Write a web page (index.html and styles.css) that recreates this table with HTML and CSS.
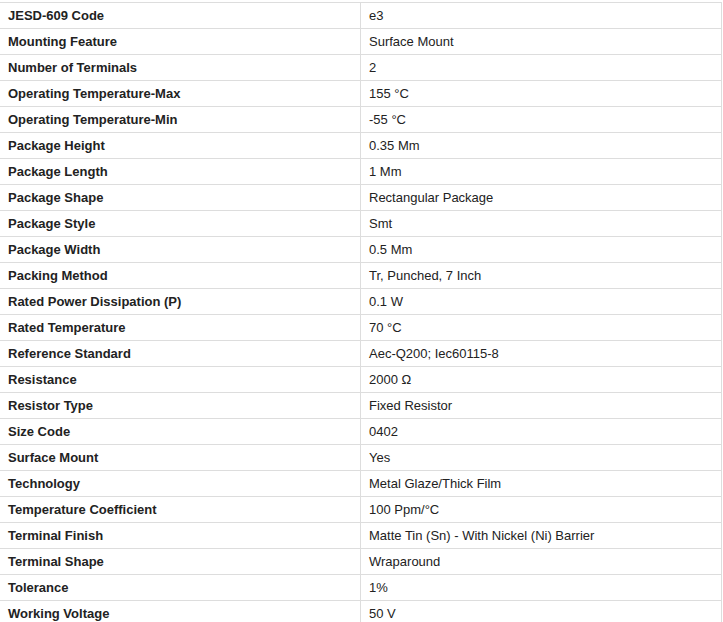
FILE: index.html
```html
<!DOCTYPE html>
<html>
<head>
<meta charset="utf-8">
<link rel="stylesheet" href="styles.css">
</head>
<body>
<table class="specs">
<tbody>
<tr><th>JESD-609 Code</th><td>e3</td></tr>
<tr><th>Mounting Feature</th><td>Surface Mount</td></tr>
<tr><th>Number of Terminals</th><td>2</td></tr>
<tr><th>Operating Temperature-Max</th><td>155 °C</td></tr>
<tr><th>Operating Temperature-Min</th><td>-55 °C</td></tr>
<tr><th>Package Height</th><td>0.35 Mm</td></tr>
<tr><th>Package Length</th><td>1 Mm</td></tr>
<tr><th>Package Shape</th><td>Rectangular Package</td></tr>
<tr><th>Package Style</th><td>Smt</td></tr>
<tr><th>Package Width</th><td>0.5 Mm</td></tr>
<tr><th>Packing Method</th><td>Tr, Punched, 7 Inch</td></tr>
<tr><th>Rated Power Dissipation (P)</th><td>0.1 W</td></tr>
<tr><th>Rated Temperature</th><td>70 °C</td></tr>
<tr><th>Reference Standard</th><td>Aec-Q200; Iec60115-8</td></tr>
<tr><th>Resistance</th><td>2000 Ω</td></tr>
<tr><th>Resistor Type</th><td>Fixed Resistor</td></tr>
<tr><th>Size Code</th><td>0402</td></tr>
<tr><th>Surface Mount</th><td>Yes</td></tr>
<tr><th>Technology</th><td>Metal Glaze/Thick Film</td></tr>
<tr><th>Temperature Coefficient</th><td>100 Ppm/°C</td></tr>
<tr><th>Terminal Finish</th><td>Matte Tin (Sn) - With Nickel (Ni) Barrier</td></tr>
<tr><th>Terminal Shape</th><td>Wraparound</td></tr>
<tr><th>Tolerance</th><td>1%</td></tr>
<tr><th>Working Voltage</th><td>50 V</td></tr>
</tbody>
</table>
</body>
</html>
```
FILE: styles.css
```css
html, body {
  margin: 0;
  padding: 0;
  background: #fff;
}
body {
  padding-top: 2px;
  font-family: "Liberation Sans", Arial, sans-serif;
  font-size: 13px;
  color: #222;
}
.specs {
  border-collapse: collapse;
  width: 722px;
  table-layout: fixed;
}
.specs tr {
  height: 26px;
}
.specs th,
.specs td {
  border-top: 1px solid #ddd;
  border-bottom: 1px solid #ddd;
  padding: 0 8px;
  height: 25px;
  text-align: left;
  vertical-align: middle;
  line-height: 15px;
}
.specs th {
  width: 344px;
  font-weight: bold;
  border-right: 1px solid #ddd;
}
.specs td {
  border-right: 1px solid #ddd;
}
```
